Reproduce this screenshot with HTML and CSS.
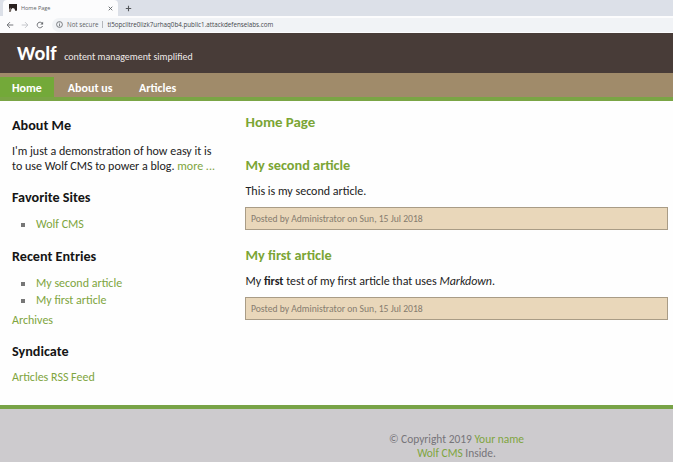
FILE: index.html
```html
<!DOCTYPE html>
<html lang="en">
<head>
<meta charset="utf-8">
<title>Home Page</title>
<link rel="stylesheet" href="styles.css">
</head>
<body>
<div class="browser">
  <div class="tabs">
    <div class="tab">
      <svg class="favicon" width="8" height="8" viewBox="0 0 8 8"><path fill="#29211f" d="M0 0h8v6.500L6.500 7 5.300 4.500 3.500 4 2.300 5.200 2 7.500H0z"/><path fill="#8b7f78" d="M0 5l2-1.500L1.500 8H0z"/></svg>
      <span class="tab-title">Home Page</span>
      <svg class="close" width="5" height="5" viewBox="0 0 5 5"><path d="M.7.7l3.600 3.600M4.300.7L.7 4.300" stroke="#5f6368" stroke-width=".9"/></svg>
    </div>
    <svg class="plus" width="7" height="7" viewBox="0 0 7 7"><path d="M3.500.8v5.400M.8 3.500h5.400" stroke="#54575b" stroke-width="1.100"/></svg>
  </div>
  <div class="toolbar">
    <svg class="nav-icon" width="8" height="8" viewBox="0 0 8 8"><path d="M7.300 4H1.200M4 1.100L1.100 4 4 6.900" fill="none" stroke="#66696d" stroke-width=".9"/></svg>
    <svg class="nav-icon" width="8" height="8" viewBox="0 0 8 8"><path d="M.7 4h6.100M4 1.100L6.900 4 4 6.900" fill="none" stroke="#bfc2c6" stroke-width=".9"/></svg>
    <svg class="nav-icon" width="8" height="8" viewBox="0 0 8 8"><path d="M6.600 5A2.800 2.800 0 1 1 6.300 2.400" fill="none" stroke="#66696d" stroke-width=".9"/><path d="M7.100.7v2.800H4.300z" fill="#66696d"/></svg>
    <div class="omnibox">
      <svg class="info" width="7" height="7" viewBox="0 0 7 7"><circle cx="3.500" cy="3.500" r="2.900" fill="none" stroke="#5f6368" stroke-width=".8"/><path d="M3.500 1.700v.8M3.500 3.100v2.200" stroke="#5f6368" stroke-width=".8"/></svg>
      <span class="security">Not secure</span>
      <span class="divider"></span>
      <span class="url">ti5opclltre0lizk7urhaq0b4.public1.attackdefenselabs.com</span>
    </div>
  </div>
</div>
<header class="header">
  <h1 class="brand">Wolf</h1>
  <span class="tagline">content management simplified</span>
</header>
<nav class="nav">
  <a class="nav-link current">Home</a>
  <a class="nav-link">About us</a>
  <a class="nav-link">Articles</a>
</nav>
<div class="columns">
  <aside class="sidebar">
    <h3>About Me</h3>
    <p>I'm just a demonstration of how easy it is<br>to use Wolf CMS to power a blog. <a>more ...</a></p>
    <h3>Favorite Sites</h3>
    <ul><li><a>Wolf CMS</a></li></ul>
    <h3>Recent Entries</h3>
    <ul class="entries"><li><a>My second article</a></li><li><a>My first article</a></li></ul>
    <p><a>Archives</a></p>
    <h3>Syndicate</h3>
    <p><a>Articles RSS Feed</a></p>
  </aside>
  <main class="content">
    <h2 class="page-title">Home Page</h2>
    <article>
      <h2>My second article</h2>
      <p>This is my second article.</p>
      <div class="info-box">Posted by Administrator on Sun, 15 Jul 2018</div>
    </article>
    <article>
      <h2>My first article</h2>
      <p>My <strong>first</strong> test of my first article that uses <em>Markdown</em>.</p>
      <div class="info-box">Posted by Administrator on Sun, 15 Jul 2018</div>
    </article>
  </main>
</div>
<footer class="footer">
  <p>© Copyright 2019 <a>Your name</a><br><a>Wolf CMS</a> Inside.</p>
</footer>
</body>
</html>
```
FILE: styles.css
```css
* { box-sizing: border-box; }
body {
  margin: 0;
  height: 462px;
  overflow: hidden;
  display: flex;
  flex-direction: column;
  background: #fefefe;
  color: #222;
  font: 12px/15px Carlito, Lato, sans-serif;
}
h1, h2, h3, p, ul { margin: 0; padding: 0; }
a { color: #7fa540; }

.browser { height: 33px; flex: none; font: 5.500px/8px "Open Sans", sans-serif; color: #5f6368; }
.tabs { height: 16px; display: flex; align-items: center; background: #dce0e8; }
.tab {
  width: 115px;
  height: 16px;
  margin-left: 3px;
  padding: 0 5px 0 6px;
  display: flex;
  align-items: center;
  background: #fcfcfd;
  border-radius: 4px 4px 0 0;
}
.tab-title { margin-left: 4px; flex: 1; }
.plus { margin-left: 7px; }
.toolbar { height: 17px; padding-left: 6px; display: flex; align-items: center; background: #fcfcfd; }
.nav-icon { margin-right: 7px; }
.omnibox {
  flex: 1;
  height: 14px;
  margin-left: 1px;
  padding-left: 4px;
  display: flex;
  align-items: center;
  background: #f1f3f6;
  border-radius: 7px 0 0 7px;
}
.security { margin-left: 4px; font-size: 6.200px; }
.divider { width: 1px; height: 7px; margin: 0 4px; background: #b4b7bb; }
.url { font-size: 6.250px; color: #44474b; }

.header {
  height: 40px;
  flex: none;
  padding: 9px 0 0 17px;
  display: flex;
  align-items: baseline;
  gap: 7.500px;
  background: #483c38;
  color: #fff;
}
.brand { font-size: 20.200px; line-height: 23px; }
.tagline { font-size: 9.950px; color: #eeeae8; }

.nav { height: 28px; flex: none; display: flex; align-items: flex-end; background: #a08b6a; border-bottom: 4px solid #7aa545; }
.nav-link { height: 20px; padding: 0 12.500px 0 14px; color: #fff; line-height: 22px; font-weight: 700; }
.nav-link.current { padding: 0 12px; background: #73a939; }

.columns { height: 304px; flex: none; display: flex; }
.sidebar { width: 245px; padding: 16px 0 0 12px; }
.sidebar h3 { margin-bottom: 10px; color: #151515; font-size: 14.200px; line-height: 17px; }
.sidebar p, .sidebar ul { margin-bottom: 15px; }
.sidebar ul { list-style: none; }
.sidebar li { display: flex; align-items: center; height: 17px; }
.sidebar li::before { content: ""; width: 4px; height: 4px; margin: 0 11px 0 9px; background: #777; }
.sidebar .entries { margin-bottom: 4px; }

.content { width: 423px; padding-top: 12px; }
.content h2 { padding-left: .5px; color: #7ba535; font-size: 14.300px; line-height: 18px; }
.content .page-title { margin-bottom: 25px; font-size: 14.900px; }
.content p { margin: 10px 0 8px; padding-left: .5px; }
.info-box {
  height: 23px;
  margin-bottom: 16px;
  padding-left: 5px;
  border: 1px solid #a99c86;
  background: #e9d7ba;
  color: #867c6f;
  font-size: 9.650px;
  line-height: 22px;
}

.footer { flex: 1; padding: 23px 0 0 240px; border-top: 4px solid #78a347; background: #cdcbce; color: #77757a; text-align: center; font-size: 11.450px; line-height: 14px; }
```
